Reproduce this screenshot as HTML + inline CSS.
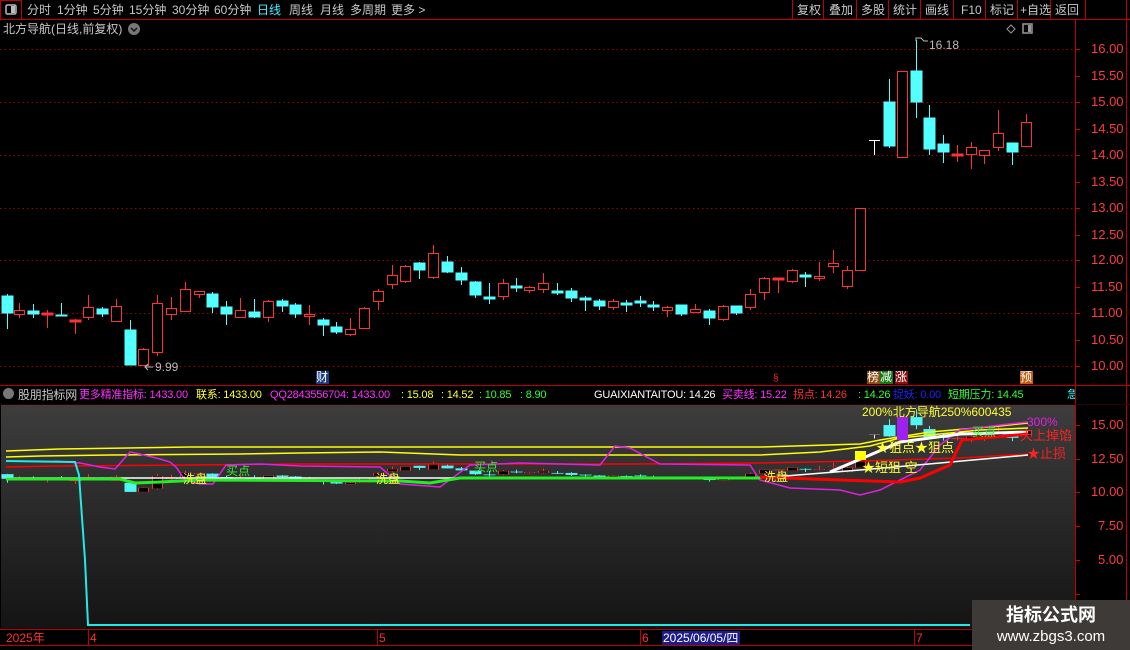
<!DOCTYPE html>
<html><head><meta charset="utf-8"><style>
*{margin:0;padding:0}
body{width:1130px;height:650px;background:#000;overflow:hidden;position:relative;font-family:"Liberation Sans","Noto Sans CJK SC",sans-serif;font-size:12px}
.a{position:absolute;white-space:nowrap;line-height:14px}
.h{font-size:11px;letter-spacing:-0.2px}
svg{position:absolute;left:0;top:0}
</style></head><body>
<svg width="1130" height="650" xmlns="http://www.w3.org/2000/svg">
<defs>
<linearGradient id="pg" x1="0" y1="0" x2="0" y2="1"><stop offset="0" stop-color="#3d3d3d"/><stop offset="1" stop-color="#141414"/></linearGradient>
</defs>
<line x1="0" y1="19.5" x2="1130" y2="19.5" stroke="#c00000"/>
<rect x="0.5" y="0.5" width="21" height="19" fill="none" stroke="#c00000"/>
<rect x="6" y="5" width="10" height="9" rx="1.5" fill="none" stroke="#bbb" stroke-width="1.5"/><rect x="11" y="6" width="4" height="7" fill="#bbb"/>
<g stroke="#c00000"><line x1="792.5" y1="0" x2="792.5" y2="19"/><line x1="823.5" y1="0" x2="823.5" y2="19"/><line x1="856.5" y1="0" x2="856.5" y2="19"/><line x1="888.5" y1="0" x2="888.5" y2="19"/><line x1="920.5" y1="0" x2="920.5" y2="19"/><line x1="953.5" y1="0" x2="953.5" y2="19"/><line x1="985.5" y1="0" x2="985.5" y2="19"/><line x1="1017.5" y1="0" x2="1017.5" y2="19"/><line x1="1050.5" y1="0" x2="1050.5" y2="19"/><line x1="1085.5" y1="0" x2="1085.5" y2="19"/><line x1="1126.5" y1="0" x2="1126.5" y2="650"/><line x1="1075.5" y1="19" x2="1075.5" y2="630"/></g>
<circle cx="134" cy="29" r="6" fill="#777"/><path d="M131 28l3 3 3-3" stroke="#111" stroke-width="1.5" fill="none"/>
<path d="M1011 25l4 4-4 4-4-4z" fill="none" stroke="#999"/>
<rect x="1023" y="24" width="9" height="9" fill="none" stroke="#999" stroke-width="1.5"/><rect x="1028" y="25" width="3" height="7" fill="#999"/>
<g stroke="#a00000" stroke-dasharray="1.5 3"><line x1="0" y1="49.5" x2="1075" y2="49.5"/><line x1="0" y1="102.5" x2="1075" y2="102.5"/><line x1="0" y1="155.5" x2="1075" y2="155.5"/><line x1="0" y1="208.5" x2="1075" y2="208.5"/><line x1="0" y1="260.5" x2="1075" y2="260.5"/><line x1="0" y1="313.5" x2="1075" y2="313.5"/><line x1="0" y1="366.5" x2="1075" y2="366.5"/></g>
<g stroke="#d00000"><line x1="1075" y1="49.5" x2="1080" y2="49.5"/><line x1="1075" y1="76.5" x2="1080" y2="76.5"/><line x1="1075" y1="102.5" x2="1080" y2="102.5"/><line x1="1075" y1="129.5" x2="1080" y2="129.5"/><line x1="1075" y1="155.5" x2="1080" y2="155.5"/><line x1="1075" y1="182.5" x2="1080" y2="182.5"/><line x1="1075" y1="208.5" x2="1080" y2="208.5"/><line x1="1075" y1="235.5" x2="1080" y2="235.5"/><line x1="1075" y1="260.5" x2="1080" y2="260.5"/><line x1="1075" y1="287.5" x2="1080" y2="287.5"/><line x1="1075" y1="313.5" x2="1080" y2="313.5"/><line x1="1075" y1="340.5" x2="1080" y2="340.5"/><line x1="1075" y1="366.5" x2="1080" y2="366.5"/></g>
<line x1="0" y1="385.5" x2="1130" y2="385.5" stroke="#c00000"/>
<rect x="1" y="405" width="1074" height="223" fill="url(#pg)"/>
<line x1="0" y1="404.5" x2="1130" y2="404.5" stroke="#300"/>
<g stroke="#d00000"><line x1="1075" y1="425.5" x2="1080" y2="425.5"/><line x1="1075" y1="459.5" x2="1080" y2="459.5"/><line x1="1075" y1="492.5" x2="1080" y2="492.5"/><line x1="1075" y1="526.5" x2="1080" y2="526.5"/><line x1="1075" y1="560.5" x2="1080" y2="560.5"/><line x1="1075" y1="594.5" x2="1080" y2="594.5"/></g>
<line x1="0" y1="629.5" x2="1130" y2="629.5" stroke="#c00000"/>
<line x1="0" y1="645.5" x2="1130" y2="645.5" stroke="#c00000"/>
<g stroke="#c00000"><line x1="88.5" y1="630" x2="88.5" y2="645"/><line x1="377.5" y1="630" x2="377.5" y2="645"/><line x1="640.5" y1="630" x2="640.5" y2="645"/><line x1="914.5" y1="630" x2="914.5" y2="645"/></g>
<rect x="662" y="631" width="78" height="14" fill="#1c1c8c"/>

<g id="cd" stroke-width="1">
<g stroke="#54ffff" fill="#54ffff">
<line x1="7.5" y1="294" x2="7.5" y2="329"/><rect x="2" y="296" width="11" height="17"/>
<line x1="33.5" y1="304" x2="33.5" y2="318"/><rect x="28" y="311" width="11" height="3"/>
<line x1="61.5" y1="303" x2="61.5" y2="316"/><rect x="56" y="315" width="11" height="1"/>
<line x1="102.5" y1="307" x2="102.5" y2="317"/><rect x="97" y="309" width="11" height="5"/>
<line x1="130.5" y1="320" x2="130.5" y2="365"/><rect x="125" y="330" width="11" height="35"/>
<line x1="212.5" y1="292" x2="212.5" y2="313"/><rect x="207" y="294" width="11" height="13"/>
<line x1="226.5" y1="301" x2="226.5" y2="325"/><rect x="221" y="307" width="11" height="7"/>
<line x1="254.5" y1="299" x2="254.5" y2="318"/><rect x="249" y="312" width="11" height="5"/>
<line x1="282.5" y1="299" x2="282.5" y2="312"/><rect x="277" y="301" width="11" height="5"/>
<line x1="295.5" y1="303" x2="295.5" y2="318"/><rect x="290" y="305" width="11" height="9"/>
<line x1="323.5" y1="318" x2="323.5" y2="336"/><rect x="318" y="320" width="11" height="5"/>
<line x1="336.5" y1="322" x2="336.5" y2="334"/><rect x="331" y="327" width="11" height="5"/>
<line x1="419.5" y1="262" x2="419.5" y2="279"/><rect x="414" y="263" width="11" height="7"/>
<line x1="447.5" y1="256" x2="447.5" y2="273"/><rect x="442" y="262" width="11" height="10"/>
<line x1="461.5" y1="267" x2="461.5" y2="285"/><rect x="456" y="273" width="11" height="7"/>
<line x1="475.5" y1="281" x2="475.5" y2="298"/><rect x="470" y="282" width="11" height="13"/>
<line x1="489.5" y1="283" x2="489.5" y2="304"/><rect x="484" y="297" width="11" height="2"/>
<line x1="516.5" y1="278" x2="516.5" y2="292"/><rect x="511" y="286" width="11" height="2"/>
<line x1="557.5" y1="283" x2="557.5" y2="295"/><rect x="552" y="291" width="11" height="2"/>
<line x1="571.5" y1="288" x2="571.5" y2="302"/><rect x="566" y="291" width="11" height="7"/>
<line x1="585.5" y1="296" x2="585.5" y2="311"/><rect x="580" y="298" width="11" height="2"/>
<line x1="599.5" y1="299" x2="599.5" y2="310"/><rect x="594" y="301" width="11" height="5"/>
<line x1="626.5" y1="300" x2="626.5" y2="312"/><rect x="621" y="303" width="11" height="2"/>
<line x1="640.5" y1="296" x2="640.5" y2="307"/><rect x="635" y="301" width="11" height="2"/>
<line x1="653.5" y1="301" x2="653.5" y2="311"/><rect x="648" y="305" width="11" height="2"/>
<line x1="681.5" y1="305" x2="681.5" y2="316"/><rect x="676" y="305" width="11" height="9"/>
<line x1="709.5" y1="309" x2="709.5" y2="325"/><rect x="704" y="311" width="11" height="7"/>
<line x1="736.5" y1="306" x2="736.5" y2="315"/><rect x="731" y="306" width="11" height="7"/>
<line x1="805.5" y1="272" x2="805.5" y2="287"/><rect x="800" y="275" width="11" height="2"/>
<line x1="889.5" y1="79" x2="889.5" y2="148"/><rect x="884" y="102" width="11" height="44"/>
<line x1="916.5" y1="40" x2="916.5" y2="118"/><rect x="911" y="71" width="11" height="31"/>
<line x1="929.5" y1="105" x2="929.5" y2="155"/><rect x="924" y="118" width="11" height="31"/>
<line x1="943.5" y1="135" x2="943.5" y2="163"/><rect x="938" y="144" width="11" height="8"/>
<line x1="1012.5" y1="143" x2="1012.5" y2="165"/><rect x="1007" y="143" width="11" height="9"/>
</g>
<g stroke="#ff3232" fill="#000">
<line x1="19.5" y1="303" x2="19.5" y2="318"/><rect x="14.5" y="310.5" width="10" height="4"/>
<line x1="88.5" y1="295" x2="88.5" y2="320"/><rect x="83.5" y="307.5" width="10" height="10"/>
<line x1="116.5" y1="299" x2="116.5" y2="321"/><rect x="111.5" y="306.5" width="10" height="15"/>
<line x1="143.5" y1="348" x2="143.5" y2="366"/><rect x="138.5" y="349.5" width="10" height="16"/>
<line x1="157.5" y1="295" x2="157.5" y2="356"/><rect x="152.5" y="303.5" width="10" height="49"/>
<line x1="171.5" y1="297" x2="171.5" y2="320"/><rect x="166.5" y="308.5" width="10" height="6"/>
<line x1="185.5" y1="282" x2="185.5" y2="311"/><rect x="180.5" y="289.5" width="10" height="22"/>
<line x1="199.5" y1="291" x2="199.5" y2="298"/><rect x="194.5" y="291.5" width="10" height="3"/>
<line x1="240.5" y1="298" x2="240.5" y2="317"/><rect x="235.5" y="310.5" width="10" height="7"/>
<line x1="268.5" y1="300" x2="268.5" y2="322"/><rect x="263.5" y="301.5" width="10" height="16"/>
<line x1="309.5" y1="305" x2="309.5" y2="325"/><rect x="304.5" y="314.5" width="10" height="2"/>
<line x1="350.5" y1="318" x2="350.5" y2="336"/><rect x="345.5" y="329.5" width="10" height="5"/>
<line x1="364.5" y1="307" x2="364.5" y2="328"/><rect x="359.5" y="308.5" width="10" height="20"/>
<line x1="378.5" y1="289" x2="378.5" y2="310"/><rect x="373.5" y="291.5" width="10" height="10"/>
<line x1="392.5" y1="265" x2="392.5" y2="289"/><rect x="387.5" y="275.5" width="10" height="9"/>
<line x1="405.5" y1="265" x2="405.5" y2="283"/><rect x="400.5" y="266.5" width="10" height="15"/>
<line x1="433.5" y1="245" x2="433.5" y2="279"/><rect x="428.5" y="253.5" width="10" height="24"/>
<line x1="503.5" y1="279" x2="503.5" y2="300"/><rect x="498.5" y="283.5" width="10" height="13"/>
<line x1="529.5" y1="286" x2="529.5" y2="293"/><rect x="524.5" y="287.5" width="10" height="3"/>
<line x1="543.5" y1="273" x2="543.5" y2="293"/><rect x="538.5" y="283.5" width="10" height="6"/>
<line x1="613.5" y1="299" x2="613.5" y2="310"/><rect x="608.5" y="301.5" width="10" height="6"/>
<line x1="667.5" y1="306" x2="667.5" y2="317"/><rect x="662.5" y="307.5" width="10" height="3"/>
<line x1="695.5" y1="304" x2="695.5" y2="312"/><rect x="690.5" y="309.5" width="10" height="3"/>
<line x1="723.5" y1="305" x2="723.5" y2="321"/><rect x="718.5" y="306.5" width="10" height="13"/>
<line x1="750.5" y1="289" x2="750.5" y2="310"/><rect x="745.5" y="294.5" width="10" height="13"/>
<line x1="764.5" y1="277" x2="764.5" y2="300"/><rect x="759.5" y="278.5" width="10" height="14"/>
<line x1="792.5" y1="269" x2="792.5" y2="283"/><rect x="787.5" y="270.5" width="10" height="11"/>
<line x1="819.5" y1="262" x2="819.5" y2="281"/><rect x="814.5" y="276.5" width="10" height="2"/>
<line x1="833.5" y1="250" x2="833.5" y2="273"/><rect x="828.5" y="263.5" width="10" height="3"/>
<line x1="847.5" y1="266" x2="847.5" y2="289"/><rect x="842.5" y="270.5" width="10" height="16"/>
<rect x="855.5" y="208.5" width="10" height="62"/>
<rect x="897.5" y="71.5" width="10" height="86"/>
<line x1="971.5" y1="142" x2="971.5" y2="169"/><rect x="966.5" y="147.5" width="10" height="7"/>
<line x1="984.5" y1="150" x2="984.5" y2="164"/><rect x="979.5" y="150.5" width="10" height="5"/>
<line x1="998.5" y1="110" x2="998.5" y2="151"/><rect x="993.5" y="133.5" width="10" height="14"/>
<line x1="1026.5" y1="114" x2="1026.5" y2="146"/><rect x="1021.5" y="122.5" width="10" height="24"/>
</g>
<g stroke="#ff3232" fill="#ff3232">
<line x1="47.5" y1="310" x2="47.5" y2="328"/><rect x="42" y="313" width="11" height="2"/>
<line x1="75.5" y1="319" x2="75.5" y2="334"/><rect x="70" y="320" width="11" height="2"/>
<line x1="778.5" y1="278" x2="778.5" y2="293"/><rect x="773" y="278" width="11" height="2"/>
<line x1="957.5" y1="145" x2="957.5" y2="162"/><rect x="952" y="154" width="11" height="2"/>
</g>
<g stroke="#fff"><line x1="869" y1="140.5" x2="880" y2="140.5"/><line x1="874.5" y1="140" x2="874.5" y2="155"/></g>
</g>
<path d="M153 367h-8M148 364l-3 3 3 3" stroke="#bbb" fill="none"/>
<path d="M916 41v-3h5l3 3h4" stroke="#bbb" fill="none"/>

<g transform="translate(0,399.2) scale(1,0.2538)" opacity="0.95"><use href="#cd"/></g>

<polyline points="6,451 60,449 190,447 400,447 760,447 860,444 880,440 930,432 1000,426 1028,423" fill="none" stroke="#ffff00" stroke-width="1.5"/>
<polyline points="6,457 40,456 110,455 240,454 300,453 380,452 460,455 760,455 820,452 870,446 900,438 980,430 1028,428" fill="none" stroke="#ffff00" stroke-width="1.5"/>
<polyline points="6,467 55,466 190,465 300,464 630,464 760,463 860,461 960,458 1028,454" fill="none" stroke="#ff0000" stroke-width="1.5"/>
<polyline points="55,461 80,463 100,467 115,469 130,452 140,454 160,459 170,462 176,467 185,480 200,484 213,484 226,465 260,464 300,466 380,467 400,484 440,487 470,465 520,463 600,465 615,446 630,448 660,464 750,465 760,480 790,488 840,490 860,495 880,490 920,470 940,445 960,430 1000,425 1028,422" fill="none" stroke="#e020e0" stroke-width="1.5"/>
<polyline points="6,478 760,478 860,470 940,463 1028,455" fill="none" stroke="#fff" stroke-width="1.5"/>
<polyline points="830,472 870,455 900,442 960,434 1028,432" fill="none" stroke="#fff" stroke-width="3"/>
<polyline points="760,477 840,480 900,482 920,478 950,465 962,440 1028,434" fill="none" stroke="#ff0000" stroke-width="3"/>
<polyline points="6,479 120,479 135,483 160,482 200,480 400,481 430,483 460,478 760,478" fill="none" stroke="#22ee22" stroke-width="3"/>
<polyline points="6,461 75,462 79,475 85,560 88,625 970,625" fill="none" stroke="#22e8e8" stroke-width="2"/>
<rect x="855" y="451" width="11" height="9" fill="#ffff00"/>
<rect x="897" y="417" width="11" height="23" fill="#a020f0"/>
</svg>

<div class="a" style="left:27px;top:3px;color:#c8c8c8">分时</div>
<div class="a" style="left:57px;top:3px;color:#c8c8c8">1分钟</div>
<div class="a" style="left:93px;top:3px;color:#c8c8c8">5分钟</div>
<div class="a" style="left:129px;top:3px;color:#c8c8c8">15分钟</div>
<div class="a" style="left:172px;top:3px;color:#c8c8c8">30分钟</div>
<div class="a" style="left:214px;top:3px;color:#c8c8c8">60分钟</div>
<div class="a" style="left:257px;top:3px;color:#3ff0ff">日线</div>
<div class="a" style="left:289px;top:3px;color:#c8c8c8">周线</div>
<div class="a" style="left:320px;top:3px;color:#c8c8c8">月线</div>
<div class="a" style="left:350px;top:3px;color:#c8c8c8">多周期</div>
<div class="a" style="left:391px;top:3px;color:#c8c8c8">更多 &gt;</div>
<div class="a" style="left:797px;top:3px;color:#c8c8c8">复权</div>
<div class="a" style="left:829px;top:3px;color:#c8c8c8">叠加</div>
<div class="a" style="left:861px;top:3px;color:#c8c8c8">多股</div>
<div class="a" style="left:893px;top:3px;color:#c8c8c8">统计</div>
<div class="a" style="left:925px;top:3px;color:#c8c8c8">画线</div>
<div class="a" style="left:961px;top:3px;color:#c8c8c8">F10</div>
<div class="a" style="left:990px;top:3px;color:#c8c8c8">标记</div>
<div class="a" style="left:1020px;top:3px;color:#c8c8c8">+自选</div>
<div class="a" style="left:1055px;top:3px;color:#c8c8c8">返回</div>
<div class="a" style="left:3px;top:22px;color:#c8c8c8">北方导航(日线,前复权)</div>

<div class="a" style="left:1091px;top:42px;color:#ff3c3c;font-size:13px">16.00</div>
<div class="a" style="left:1091px;top:69px;color:#ff3c3c;font-size:13px">15.50</div>
<div class="a" style="left:1091px;top:95px;color:#ff3c3c;font-size:13px">15.00</div>
<div class="a" style="left:1091px;top:122px;color:#ff3c3c;font-size:13px">14.50</div>
<div class="a" style="left:1091px;top:148px;color:#ff3c3c;font-size:13px">14.00</div>
<div class="a" style="left:1091px;top:175px;color:#ff3c3c;font-size:13px">13.50</div>
<div class="a" style="left:1091px;top:201px;color:#ff3c3c;font-size:13px">13.00</div>
<div class="a" style="left:1091px;top:228px;color:#ff3c3c;font-size:13px">12.50</div>
<div class="a" style="left:1091px;top:253px;color:#ff3c3c;font-size:13px">12.00</div>
<div class="a" style="left:1091px;top:280px;color:#ff3c3c;font-size:13px">11.50</div>
<div class="a" style="left:1091px;top:306px;color:#ff3c3c;font-size:13px">11.00</div>
<div class="a" style="left:1091px;top:333px;color:#ff3c3c;font-size:13px">10.50</div>
<div class="a" style="left:1091px;top:359px;color:#ff3c3c;font-size:13px">10.00</div>
<div class="a" style="left:1091px;top:418px;color:#ff3c3c;font-size:13px">15.00</div>
<div class="a" style="left:1091px;top:452px;color:#ff3c3c;font-size:13px">12.50</div>
<div class="a" style="left:1091px;top:485px;color:#ff3c3c;font-size:13px">10.00</div>
<div class="a" style="left:1098px;top:519px;color:#ff3c3c;font-size:13px">7.50</div>
<div class="a" style="left:1098px;top:553px;color:#ff3c3c;font-size:13px">5.00</div>

<div class="a" style="left:155px;top:360px;color:#bbb">9.99</div>
<div class="a" style="left:929px;top:38px;color:#bbb">16.18</div>
<div class="a" style="left:316px;top:371px;width:13px;height:13px;background:#1a3c80;color:#fff;font-size:12px;line-height:13px">财</div>
<div class="a" style="left:773px;top:372px;color:#ff2020;font-size:10px">§</div>
<div class="a" style="left:867px;top:371px;width:13px;height:13px;background:#8b4a13;color:#fff;line-height:13px">榜</div>
<div class="a" style="left:880px;top:371px;width:13px;height:13px;background:#117a11;color:#fff;line-height:13px">减</div>
<div class="a" style="left:895px;top:371px;width:13px;height:13px;background:#8a1010;color:#fff;line-height:13px">涨</div>
<div class="a" style="left:1020px;top:371px;width:13px;height:13px;background:#c85a10;color:#fff;line-height:13px">预</div>

<div class="a" style="left:3px;top:388px;width:11px;height:11px;border-radius:50%;background:#777"></div>
<div class="a h" style="left:18px;top:388px;color:#c8c8c8;font-size:12px">股朋指标网</div>
<div class="a h" style="left:79px;top:388px;color:#ff30ff">更多精准指标: 1433.00</div>
<div class="a h" style="left:196px;top:388px;color:#ffff30">联系: 1433.00</div>
<div class="a h" style="left:270px;top:388px;color:#ff30ff">QQ2843556704: 1433.00</div>
<div class="a h" style="left:401px;top:388px;color:#ffff30">: 15.08</div>
<div class="a h" style="left:441px;top:388px;color:#ffff30">: 14.52</div>
<div class="a h" style="left:479px;top:388px;color:#30ff30">: 10.85</div>
<div class="a h" style="left:520px;top:388px;color:#30ff30">: 8.90</div>
<div class="a h" style="left:594px;top:388px;color:#fff">GUAIXIANTAITOU: 14.26</div>
<div class="a h" style="left:722px;top:388px;color:#ff30ff">买卖线: 15.22</div>
<div class="a h" style="left:793px;top:388px;color:#ff3030">拐点: 14.26</div>
<div class="a h" style="left:858px;top:388px;color:#30ff30">: 14.26</div>
<div class="a h" style="left:893px;top:388px;color:#2020ff">捉妖: 0.00</div>
<div class="a h" style="left:948px;top:388px;color:#30ff30">短期压力: 14.45</div>
<div class="a h" style="left:1067px;top:388px;color:#30ffff;width:8px;overflow:hidden">急</div>

<div class="a" style="left:862px;top:405px;color:#ffff30">200%北方导航250%600435</div>
<div class="a" style="left:1027px;top:415px;color:#e020e0">300%</div>
<div class="a" style="left:1020px;top:429px;color:#ff2020;font-size:13px">天上掉馅</div>
<div class="a" style="left:1027px;top:447px;color:#ff2020;font-size:13px">★止损</div>
<div class="a" style="left:876px;top:441px;color:#ffff30;font-size:13px">★狙点★狙点</div>
<div class="a" style="left:862px;top:461px;color:#ffff30;font-size:13px">★短狙 空</div>
<div class="a" style="left:183px;top:472px;color:#ffff30">洗盘</div>
<div class="a" style="left:376px;top:472px;color:#ffff30">洗盘</div>
<div class="a" style="left:764px;top:470px;color:#ffff30">洗盘</div>
<div class="a" style="left:226px;top:464px;color:#30ee30">买点</div>
<div class="a" style="left:474px;top:460px;color:#30ee30">买点</div>
<div class="a" style="left:972px;top:425px;color:#30ee30">买点</div>

<div class="a" style="left:6px;top:631px;color:#ff3030">2025年</div>
<div class="a" style="left:90px;top:631px;color:#ff3030">4</div>
<div class="a" style="left:379px;top:631px;color:#ff3030">5</div>
<div class="a" style="left:642px;top:631px;color:#ff3030">6</div>
<div class="a" style="left:663px;top:631px;color:#fff">2025/06/05/四</div>
<div class="a" style="left:916px;top:631px;color:#ff3030">7</div>

<div class="a" style="left:972px;top:600px;width:158px;height:50px;background:#3e3a38"></div>
<div class="a" style="left:972px;top:605px;width:158px;text-align:center;color:#fff;font-size:18px;font-weight:bold;line-height:20px">指标公式网</div>
<div class="a" style="left:972px;top:628px;width:158px;text-align:center;color:#fff;font-size:15px;line-height:17px">www.zbgs3.com</div>
</body></html>
